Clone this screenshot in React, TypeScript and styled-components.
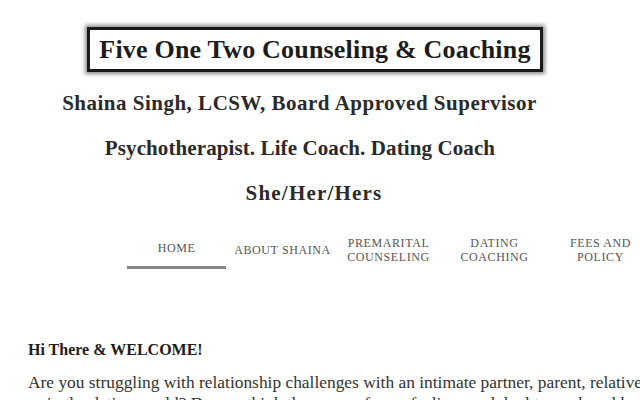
import styled, { createGlobalStyle } from "styled-components";

const GlobalStyle = createGlobalStyle`
  html, body {
    margin: 0;
    padding: 0;
    background: #fff;
    overflow: hidden;
  }
  body {
    font-family: "Liberation Serif", "DejaVu Serif", serif;
    color: #222;
  }
`;

const navItems = [
  { label: ["HOME"], active: true },
  { label: ["ABOUT SHAINA"] },
  { label: ["PREMARITAL", "COUNSELING"] },
  { label: ["DATING", "COACHING"] },
  { label: ["FEES AND", "POLICY"] },
];

const App = () => {
  return (
    <>
      <GlobalStyle />
      <Page>
        <Header>
          <TitleBox>
            <h1>Five One Two Counseling &amp; Coaching</h1>
          </TitleBox>
          <SubTitle $shift={-41} $spacing={0.5} $first>
            Shaina Singh, LCSW, Board Approved Supervisor
          </SubTitle>
          <SubTitle $shift={-40} $spacing={0.1}>
            Psychotherapist. Life Coach. Dating Coach
          </SubTitle>
          <SubTitle $shift={-12} $spacing={1.2}>
            She/Her/Hers
          </SubTitle>
        </Header>

        <Nav>
          {navItems.map((item) => (
            <NavItem key={item.label.join(" ")} $active={item.active}>
              {item.label.map((line) => (
                <span key={line}>{line}</span>
              ))}
            </NavItem>
          ))}
        </Nav>

        <Content>
          <h2>Hi There &amp; WELCOME!</h2>
          <p>
            Are you struggling with relationship challenges with an intimate partner, parent, relative,
            <br />
            or in the dating world? Do you think the cause of your feelings and doubts can be addressed?
          </p>
        </Content>
      </Page>
    </>
  );
};

export default App;

const Page = styled.div`
  width: 640px;
  height: 400px;
  overflow: hidden;
`;

const Header = styled.header`
  display: flex;
  flex-direction: column;
  align-items: center;
  padding-top: 27px;
`;

const TitleBox = styled.div`
  width: 456px;
  height: 45px;
  margin-left: -10px;
  box-sizing: border-box;
  border: 3px solid #1a1a1a;
  box-shadow: 0 0 4px 2px rgba(0, 0, 0, 0.45);
  display: flex;
  align-items: center;
  justify-content: center;

  h1 {
    margin: 0;
    font-family: "Liberation Serif", serif;
    font-weight: 700;
    font-size: 26px;
    letter-spacing: 0.2px;
    color: #1c1c1c;
    white-space: nowrap;
  }
`;

const SubTitle = styled.h3<{ $shift: number; $spacing: number; $first?: boolean }>`
  margin: ${(p) => (p.$first ? "9px" : "0")} 0 0 ${(p) => p.$shift}px;
  height: 45px;
  line-height: 45px;
  font-family: "Liberation Serif", serif;
  font-weight: 700;
  font-size: 21px;
  letter-spacing: ${(p) => p.$spacing}px;
  color: #2a2a2a;
  white-space: nowrap;
`;

const Nav = styled.nav`
  display: flex;
  gap: 7px;
  padding-left: 127px;
  margin-top: 15px;
  width: max-content;
`;

const NavItem = styled.div<{ $active?: boolean }>`
  width: 99px;
  height: 38px;
  box-sizing: border-box;
  display: flex;
  flex-direction: column;
  align-items: center;
  justify-content: center;
  padding-top: ${(p) => (p.$active ? "0" : "3px")};
  padding-bottom: ${(p) => (p.$active ? "1px" : "0")};
  font-family: "Liberation Serif", serif;
  font-size: 12px;
  letter-spacing: 0.6px;
  line-height: 14px;
  color: #555;
  border-bottom: 3px solid ${(p) => (p.$active ? "#888" : "transparent")};

  span {
    white-space: nowrap;
  }
`;

const Content = styled.section`
  padding: 0 28px;
  margin-top: 72px;

  h2 {
    margin: 0 0 13px;
    font-family: "Liberation Serif", serif;
    font-weight: 700;
    font-size: 16px;
    color: #1c1c1c;
  }

  p {
    margin: 0;
    width: 760px;
    font-family: "Liberation Serif", serif;
    font-size: 17.4px;
    line-height: 21px;
    color: #333;
    white-space: nowrap;
  }
`;
